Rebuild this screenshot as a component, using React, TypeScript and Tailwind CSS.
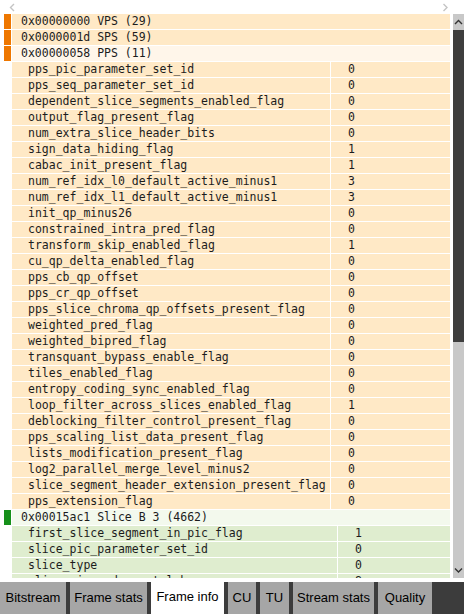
import React from "react";

interface Field {
  name: string;
  value: string;
}

const ppsFields: Field[] = [
  { name: "pps_pic_parameter_set_id", value: "0" },
  { name: "pps_seq_parameter_set_id", value: "0" },
  { name: "dependent_slice_segments_enabled_flag", value: "0" },
  { name: "output_flag_present_flag", value: "0" },
  { name: "num_extra_slice_header_bits", value: "0" },
  { name: "sign_data_hiding_flag", value: "1" },
  { name: "cabac_init_present_flag", value: "1" },
  { name: "num_ref_idx_l0_default_active_minus1", value: "3" },
  { name: "num_ref_idx_l1_default_active_minus1", value: "3" },
  { name: "init_qp_minus26", value: "0" },
  { name: "constrained_intra_pred_flag", value: "0" },
  { name: "transform_skip_enabled_flag", value: "1" },
  { name: "cu_qp_delta_enabled_flag", value: "0" },
  { name: "pps_cb_qp_offset", value: "0" },
  { name: "pps_cr_qp_offset", value: "0" },
  { name: "pps_slice_chroma_qp_offsets_present_flag", value: "0" },
  { name: "weighted_pred_flag", value: "0" },
  { name: "weighted_bipred_flag", value: "0" },
  { name: "transquant_bypass_enable_flag", value: "0" },
  { name: "tiles_enabled_flag", value: "0" },
  { name: "entropy_coding_sync_enabled_flag", value: "0" },
  { name: "loop_filter_across_slices_enabled_flag", value: "1" },
  { name: "deblocking_filter_control_present_flag", value: "0" },
  { name: "pps_scaling_list_data_present_flag", value: "0" },
  { name: "lists_modification_present_flag", value: "0" },
  { name: "log2_parallel_merge_level_minus2", value: "0" },
  { name: "slice_segment_header_extension_present_flag", value: "0" },
  { name: "pps_extension_flag", value: "0" },
];

const sliceFields: Field[] = [
  { name: "first_slice_segment_in_pic_flag", value: "1" },
  { name: "slice_pic_parameter_set_id", value: "0" },
  { name: "slice_type", value: "0" },
  { name: "slice_pic_order_cnt_lsb", value: "8" },
];

const tabs = [
  { label: "Bitstream", w: "w-[66px]" },
  { label: "Frame stats", w: "w-[77px]" },
  { label: "Frame info", w: "w-[73px]", active: true },
  { label: "CU", w: "w-[28px]" },
  { label: "TU", w: "w-[29px]" },
  { label: "Stream stats", w: "w-[81px]" },
  { label: "Quality", w: "w-[54px]" },
];

const NalHeader = ({ text, marker, bg }: { text: string; marker: string; bg: string }) => (
  <div className="flex h-[15px] mb-[1px]">
    <div className={`ml-[4px] w-[7px] mr-[1px] ${marker}`} />
    <div className={`flex-1 pl-[9px] ${bg}`}>{text}</div>
  </div>
);

const FieldRow = ({ field, nameW, bg }: { field: Field; nameW: string; bg: string }) => (
  <div className="flex h-[15px] mb-[1px] ml-[12px] gap-[1px]">
    <div className={`${nameW} shrink-0 pl-[16px] whitespace-nowrap overflow-hidden ${bg}`}>{field.name}</div>
    <div className={`flex-1 pl-[17px] ${bg}`}>{field.value}</div>
  </div>
);

const Chevron = ({ dir, color }: { dir: "up" | "down" | "left" | "right"; color: string }) => {
  const pts = {
    up: "1,5 4.5,1.5 8,5",
    down: "1,1.5 4.5,5 8,1.5",
    left: "5,1 1.5,4.5 5,8",
    right: "1.5,1 5,4.5 1.5,8",
  }[dir];
  const vb = dir === "up" || dir === "down" ? "0 0 9 7" : "0 0 7 9";
  const size = dir === "up" || dir === "down" ? { width: 9, height: 7 } : { width: 7, height: 9 };
  return (
    <svg viewBox={vb} {...size}>
      <polyline points={pts} fill="none" stroke={color} strokeWidth="1.4" />
    </svg>
  );
};

export default function App() {
  return (
    <div className="w-[464px] h-[614px] bg-white flex flex-col overflow-hidden">
      {/* frame navigation */}
      <div className="h-[14px] flex items-center justify-between pl-[9px] pr-[15px]">
        <Chevron dir="left" color="#c4c4c4" />
        <Chevron dir="right" color="#c4c4c4" />
      </div>

      <div className="h-[564px] flex">
        <div
          className="w-[453px] pr-[3px] overflow-hidden text-[11.5px] leading-[15px] text-[#1c1c1c]"
          style={{ fontFamily: '"DejaVu Sans Mono", monospace' }}
        >
          <NalHeader text="0x00000000 VPS (29)" marker="bg-[#ee7700]" bg="bg-[#ffe9c6]" />
          <NalHeader text="0x0000001d SPS (59)" marker="bg-[#ee7700]" bg="bg-[#ffe9c6]" />
          <NalHeader text="0x00000058 PPS (11)" marker="bg-[#ee7700]" bg="bg-[#fff6ea]" />
          {ppsFields.map((f) => (
            <FieldRow key={f.name} field={f} nameW="w-[318px]" bg="bg-[#ffe9c6]" />
          ))}
          <NalHeader text="0x00015ac1 Slice B 3 (4662)" marker="bg-[#16901a]" bg="bg-[#f3f9ed]" />
          {sliceFields.map((f) => (
            <FieldRow key={f.name} field={f} nameW="w-[325px]" bg="bg-[#dfedcf]" />
          ))}
        </div>

        {/* scrollbar */}
        <div className="w-[11px] flex flex-col bg-[#c8c8c8]">
          <div className="h-[16px] flex items-center justify-center">
            <Chevron dir="up" color="#333333" />
          </div>
          <div className="h-[312px] bg-[#3e3e3e]" />
          <div className="flex-1" />
          <div className="h-[16px] flex items-center justify-center">
            <Chevron dir="down" color="#333333" />
          </div>
        </div>
      </div>

      <div className="h-[4px]" />

      {/* tab bar */}
      <div
        className="h-[32px] bg-[#3c3c3c] flex gap-[4px] text-[13px] text-black"
        style={{ fontFamily: '"Liberation Sans", Arial, sans-serif' }}
      >
        {tabs.map((t) => (
          <div
            key={t.label}
            className={`${t.w} flex items-center justify-center whitespace-nowrap ${
              t.active ? "bg-white -mt-[2px]" : "bg-[#a6a6a6]"
            }`}
          >
            {t.label}
          </div>
        ))}
      </div>
    </div>
  );
}
